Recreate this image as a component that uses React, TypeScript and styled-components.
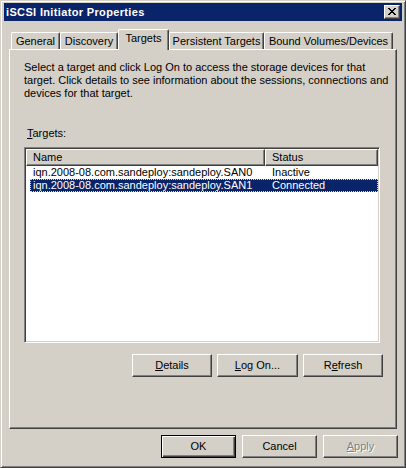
import React from 'react';
import styled, { createGlobalStyle } from 'styled-components';

const face = '#D4D0C8';
const shadow = '#808080';
const dark = '#404040';
const navy = '#0A246A';

const Global = createGlobalStyle`
  html, body { margin: 0; padding: 0; background: ${face}; }
  body {
    font-family: Tahoma, "Liberation Sans", Arial, sans-serif;
    font-size: 11px;
    color: #000;
  }
  * { box-sizing: border-box; }
`;

const Window = styled.div`
  width: 406px;
  height: 468px;
  background: ${face};
  border: 1px solid;
  border-color: ${face} ${dark} ${dark} ${face};
  box-shadow: inset 1px 1px #fff, inset -1px -1px ${shadow};
  padding: 2px 3px 3px 3px;
  display: flex;
  flex-direction: column;
`;

const TitleBar = styled.div`
  height: 18px;
  background: ${navy};
  display: flex;
  align-items: center;
  justify-content: space-between;
  padding: 0 2px;
`;

const Title = styled.span`
  color: #fff;
  font-weight: bold;
  font-size: 11px;
  letter-spacing: 0.35px;
  line-height: 13px;
`;

const CloseButton = styled.div`
  width: 16px;
  height: 14px;
  background: ${face};
  border: 1px solid;
  border-color: #fff ${dark} ${dark} #fff;
  box-shadow: inset -1px -1px ${shadow};
  display: flex;
  align-items: center;
  justify-content: center;
  padding: 0 1px 1px 0;
`;

const Body = styled.div`
  flex: 1;
  display: flex;
  flex-direction: column;
  padding: 8px 5px 0 5px;
`;

const TabStrip = styled.div`
  height: 21px;
  display: flex;
  align-items: flex-end;
  padding-left: 2px;
  margin-bottom: -1px;
  position: relative;
  z-index: 1;
`;

const Tab = styled.div<{ $w: number; $active?: boolean }>`
  width: ${(p) => p.$w}px;
  height: ${(p) => (p.$active ? 21 : 17)}px;
  margin-bottom: ${(p) => (p.$active ? 0 : 1)}px;
  background: ${face};
  border-top: 1px solid #fff;
  border-left: 1px solid #fff;
  border-right: 1px solid ${dark};
  box-shadow: inset -1px 0 ${shadow};
  border-radius: 2px 2px 0 0;
  text-align: center;
  padding-top: 2px;
  line-height: 13px;
  white-space: nowrap;
`;

const Panel = styled.div`
  height: 380px;
  background: ${face};
  border: 1px solid;
  border-color: #fff ${dark} ${dark} #fff;
  box-shadow: inset -1px -1px ${shadow};
  padding: 11px 14px 0 14px;
  display: flex;
  flex-direction: column;
`;

const Description = styled.p`
  margin: 0;
  line-height: 13px;
  white-space: nowrap;
`;

const Label = styled.div`
  margin-top: 27px;
  padding-left: 3px;
  line-height: 13px;
`;

const ListView = styled.div`
  margin-top: 7px;
  width: 356px;
  height: 196px;
  background: #fff;
  border: 1px solid;
  border-color: ${shadow} #fff #fff ${shadow};
  box-shadow: inset 1px 1px ${dark}, inset -1px -1px ${face};
  padding: 1px;
`;

const Header = styled.div`
  display: grid;
  grid-template-columns: 239px 113px;
  height: 17px;
`;

const HeaderCell = styled.div`
  background: ${face};
  border: 1px solid;
  border-color: #fff ${dark} ${dark} #fff;
  box-shadow: inset -1px -1px ${shadow};
  padding-left: 6px;
  line-height: 14px;
  white-space: nowrap;
`;

const Row = styled.div<{ $selected?: boolean }>`
  display: grid;
  grid-template-columns: 235px 1fr;
  height: 13px;
  line-height: 13px;
  margin-left: 4px;
  background: ${(p) => (p.$selected ? navy : 'transparent')};
  color: ${(p) => (p.$selected ? '#fff' : '#000')};
  outline: ${(p) => (p.$selected ? `1px dotted #E8D89A` : 'none')};
  outline-offset: -1px;
  white-space: nowrap;
`;

const Cell = styled.div<{ $pad: number }>`
  padding-left: ${(p) => p.$pad}px;
  overflow: hidden;
`;

const ButtonRow = styled.div<{ $top: number; $gap: number; $right: number }>`
  display: flex;
  justify-content: flex-end;
  gap: ${(p) => p.$gap}px;
  margin-top: ${(p) => p.$top}px;
  margin-right: ${(p) => p.$right}px;
`;

const Button = styled.div<{ $w: number; $default?: boolean; $disabled?: boolean }>`
  width: ${(p) => p.$w}px;
  height: 23px;
  background: ${face};
  border: 1px solid;
  border-color: ${(p) => (p.$default ? '#000' : `#fff ${dark} ${dark} #fff`)};
  box-shadow: ${(p) =>
    p.$default
      ? `inset 1px 1px #fff, inset -1px -1px ${dark}, inset -2px -2px ${shadow}`
      : `inset -1px -1px ${shadow}`};
  display: flex;
  align-items: center;
  justify-content: center;
  line-height: 13px;
  color: ${(p) => (p.$disabled ? shadow : '#000')};
  text-shadow: ${(p) => (p.$disabled ? '1px 1px #fff' : 'none')};
`;

const CloseGlyph = () => (
  <svg width="8" height="7" viewBox="0 0 8 7" shapeRendering="crispEdges">
    <g fill="#000">
      <rect x="0" y="0" width="2" height="1" />
      <rect x="6" y="0" width="2" height="1" />
      <rect x="1" y="1" width="2" height="1" />
      <rect x="5" y="1" width="2" height="1" />
      <rect x="2" y="2" width="4" height="1" />
      <rect x="3" y="3" width="2" height="1" />
      <rect x="2" y="4" width="4" height="1" />
      <rect x="1" y="5" width="2" height="1" />
      <rect x="5" y="5" width="2" height="1" />
      <rect x="0" y="6" width="2" height="1" />
      <rect x="6" y="6" width="2" height="1" />
    </g>
  </svg>
);

const tabs = [
  { label: 'General', w: 49 },
  { label: 'Discovery', w: 58 },
  { label: 'Targets', w: 51, active: true },
  { label: 'Persistent Targets', w: 95 },
  { label: 'Bound Volumes/Devices', w: 129 },
];

const targets = [
  { name: 'iqn.2008-08.com.sandeploy:sandeploy.SAN0', status: 'Inactive' },
  { name: 'iqn.2008-08.com.sandeploy:sandeploy.SAN1', status: 'Connected', selected: true },
];

export default function App() {
  return (
    <>
      <Global />
      <Window>
        <TitleBar>
          <Title>iSCSI Initiator Properties</Title>
          <CloseButton>
            <CloseGlyph />
          </CloseButton>
        </TitleBar>
        <Body>
          <TabStrip>
            {tabs.map((t) => (
              <Tab key={t.label} $w={t.w} $active={t.active}>
                {t.label}
              </Tab>
            ))}
          </TabStrip>
          <Panel>
            <Description>
              Select a target and click Log On to access the storage devices for that
              <br />
              target. Click details to see information about the sessions, connections and
              <br />
              devices for that target.
            </Description>
            <Label>
              <u>T</u>argets:
            </Label>
            <ListView>
              <Header>
                <HeaderCell>Name</HeaderCell>
                <HeaderCell>Status</HeaderCell>
              </Header>
              {targets.map((r) => (
                <Row key={r.name} $selected={r.selected}>
                  <Cell $pad={3}>{r.name}</Cell>
                  <Cell $pad={7}>{r.status}</Cell>
                </Row>
              ))}
            </ListView>
            <ButtonRow $top={11} $gap={5} $right={-1}>
              <Button $w={80}>
                <span>
                  <u>D</u>etails
                </span>
              </Button>
              <Button $w={81}>
                <span>
                  <u>L</u>og On...
                </span>
              </Button>
              <Button $w={80}>
                <span>
                  R<u>e</u>fresh
                </span>
              </Button>
            </ButtonRow>
          </Panel>
          <ButtonRow $top={6} $gap={6} $right={-1}>
            <Button $w={75} $default>
              OK
            </Button>
            <Button $w={75}>Cancel</Button>
            <Button $w={75} $disabled>
              <span>
                <u>A</u>pply
              </span>
            </Button>
          </ButtonRow>
        </Body>
      </Window>
    </>
  );
}
